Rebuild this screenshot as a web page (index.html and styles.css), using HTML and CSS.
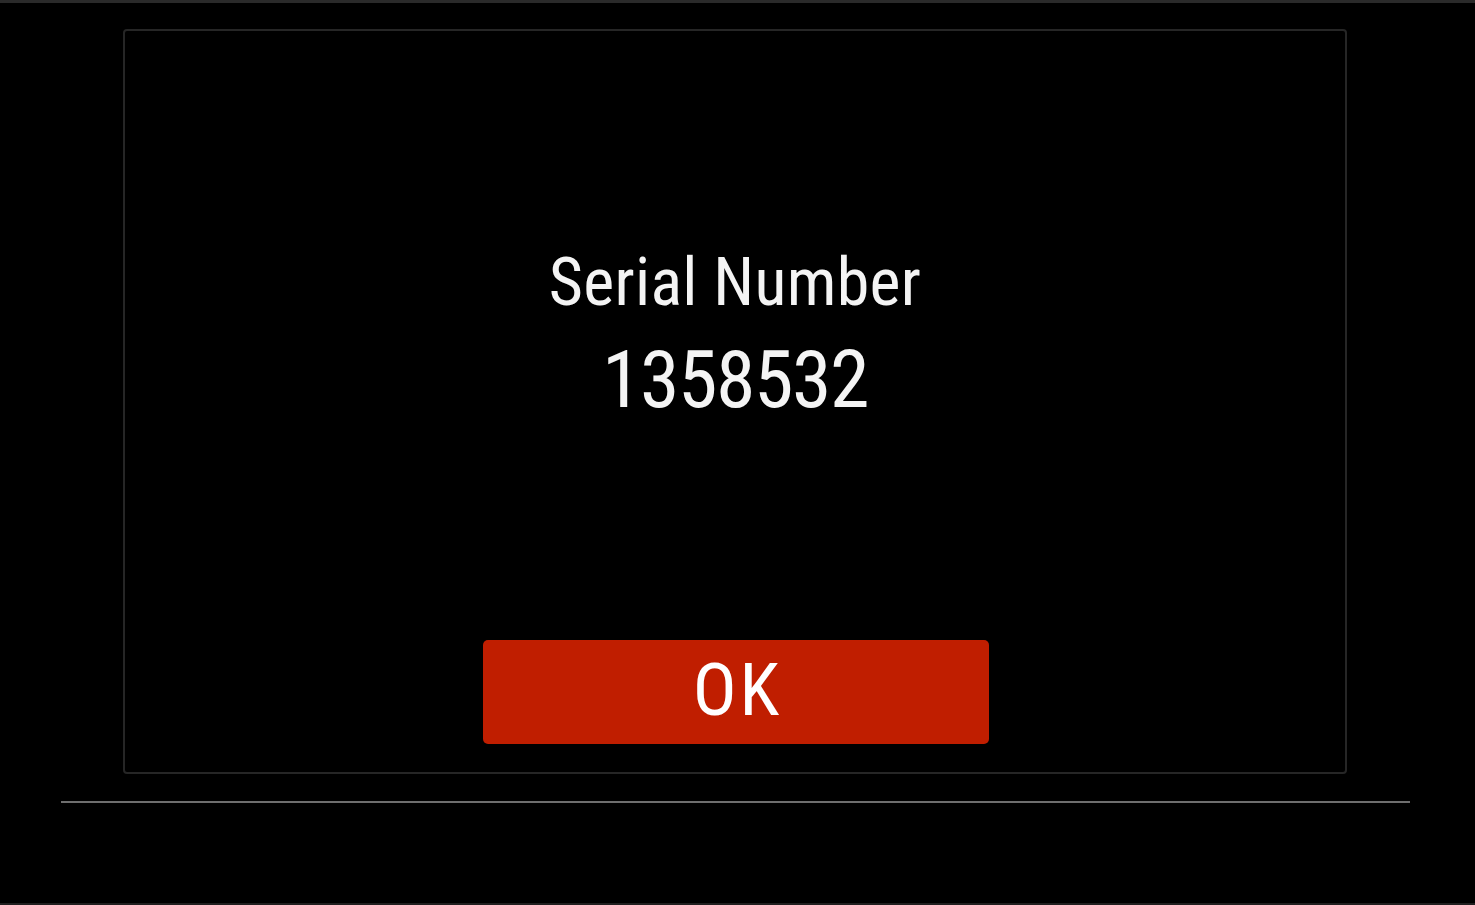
FILE: index.html
```html
<!DOCTYPE html>
<html lang="en">
<head>
<meta charset="utf-8">
<title>Serial Number</title>
<link rel="stylesheet" href="styles.css">
</head>
<body>
<div class="screen">
  <div class="top-strip"></div>
  <div class="main">
    <div class="panel">
      <div class="info">
        <div class="label">Serial Number</div>
        <div class="value">1358532</div>
      </div>
      <button class="ok-btn" type="button">OK</button>
    </div>
    <div class="divider"></div>
  </div>
  <div class="bottom-strip"></div>
</div>
</body>
</html>
```

FILE: styles.css
```css
html, body {
  margin: 0;
  padding: 0;
  background: #000;
}
.screen {
  width: 1475px;
  height: 905px;
  display: flex;
  flex-direction: column;
  background: #000;
  font-family: "Roboto Condensed", "Liberation Sans Narrow", "Liberation Sans", Arial, sans-serif;
  color: #f4f4f4;
  overflow: hidden;
}
.top-strip {
  height: 3px;
  background: #2a2a2a;
  flex: none;
}
.main {
  flex: 1;
  display: flex;
  flex-direction: column;
  padding-top: 26px;
}
.panel {
  margin-left: 123px;
  width: 1224px;
  height: 745px;
  box-sizing: border-box;
  border: 2px solid #262626;
  border-radius: 4px;
  display: flex;
  flex-direction: column;
  align-items: center;
}
.info {
  margin-top: 212px;
  display: flex;
  flex-direction: column;
  align-items: center;
}
.label {
  font-size: 66px;
  line-height: 80px;
  letter-spacing: 0.3px;
}
.value {
  font-size: 80px;
  line-height: 100px;
  margin-top: 7px;
  letter-spacing: -1.5px;
}
.ok-btn {
  margin-top: auto;
  margin-bottom: 28px;
  width: 506px;
  height: 104px;
  margin-left: 2px;
  background: #c01e00;
  border: none;
  border-radius: 5px;
  color: #fff;
  font-family: inherit;
  font-size: 73px;
  line-height: 100px;
  letter-spacing: 3px;
  padding: 0 0 4px 3px;
  box-sizing: border-box;
}
.divider {
  margin-top: 27px;
  margin-left: 61px;
  width: 1349px;
  height: 2px;
  background: #6e6e6e;
}
.bottom-strip {
  height: 2px;
  background: #1f1f1f;
  flex: none;
}
```
